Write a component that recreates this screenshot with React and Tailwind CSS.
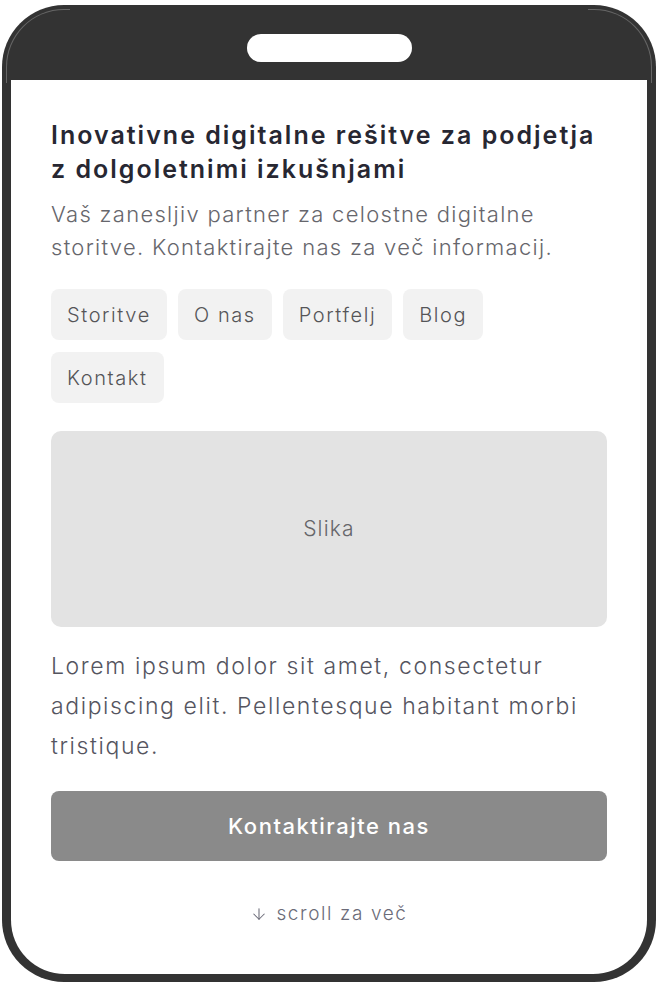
import React from "react";
import { ArrowDown } from "lucide-react";

const navItems = ["Storitve", "O nas", "Portfelj", "Blog", "Kontakt"];

export default function App() {
  return (
    <div className="w-[658px] h-[989px] bg-white pt-[5px] pl-[2px]" style={{ fontFamily: "Inter, 'Noto Sans', sans-serif" }}>
      <div className="relative w-[654px] h-[977px] bg-[#333333] rounded-[62px] px-[9px] pb-[8px] flex flex-col">
        <div className="pointer-events-none absolute left-[4px] top-[4px] w-[64px] h-[74px] rounded-tl-[58px] border-t border-l border-white/25" />
        <div className="pointer-events-none absolute right-[4px] top-[4px] w-[64px] h-[74px] rounded-tr-[58px] border-t border-r border-white/25" />
        <div className="h-[75px] shrink-0 pt-[10px] flex items-center justify-center">
          <div className="w-[165px] h-[28px] rounded-full bg-white" />
        </div>
        <div className="flex-1 bg-white rounded-b-[54px] px-[40px] pt-[38px] flex flex-col">
          <h1 className="text-[25px] leading-[34px] font-semibold text-[#272732] tracking-[2px]">
            Inovativne digitalne rešitve za podjetja z dolgoletnimi izkušnjami
          </h1>
          <p className="mt-[12px] text-[22px] leading-[33px] font-light text-[#66666c] tracking-[1.3px]">
            Vaš zanesljiv partner za celostne digitalne storitve. Kontaktirajte nas za več informacij.
          </p>
          <div className="mt-[25px] max-w-[500px] flex flex-wrap gap-x-[11px] gap-y-[12px]">
            {navItems.map((item) => (
              <span key={item} className="h-[51px] px-[16px] flex items-center rounded-[8px] bg-[#f2f2f2] text-[20px] font-light text-[#555558] tracking-[1.6px]">
                {item}
              </span>
            ))}
          </div>
          <div className="mt-[28px] h-[196px] rounded-[10px] bg-[#e3e3e3] flex items-center justify-center text-[21px] font-light text-[#66666a] tracking-[1.2px]">
            Slika
          </div>
          <p className="mt-[19px] text-[23px] leading-[40px] font-light text-[#55555f] tracking-[1.6px]">
            Lorem ipsum dolor sit amet, consectetur adipiscing elit. Pellentesque habitant morbi tristique.
          </p>
          <button className="mt-[25px] h-[70px] w-full rounded-[8px] bg-[#8a8a8a] text-white text-[22px] font-medium tracking-[1.5px]">
            Kontaktirajte nas
          </button>
          <div className="mt-[41px] flex items-center justify-center gap-[8px] text-[19px] leading-[24px] font-light text-[#6b6b78] tracking-[1.6px]">
            <ArrowDown size={18} strokeWidth={1.4} />
            <span>scroll za več</span>
          </div>
        </div>
      </div>
    </div>
  );
}
